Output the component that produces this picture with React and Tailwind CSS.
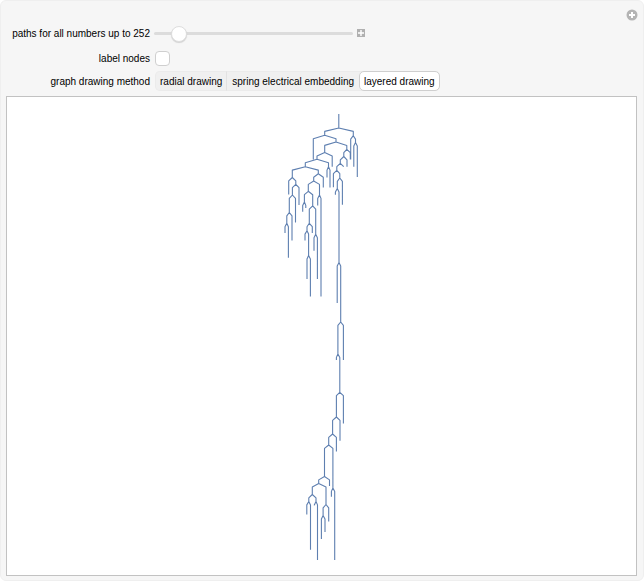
import { useState } from "react";

// Each fork: [x, y, left x, left bottom, right x, right bottom]
const forks = [
  [338.8, 128, 324.7, 135.3, 353.3, 135.7],
  [353.3, 135.7, 350.7, 159.5, 355.5, 142.5],
  [355.5, 142.5, 353.8, 166.7, 357.3, 177],
  [324.7, 135.3, 313.3, 159.5, 336, 142],
  [336, 142, 324.7, 152.5, 346.8, 149.3],
  [324.7, 152.5, 317, 159.3, 332.2, 166.7],
  [317, 159.3, 305.3, 166.7, 328.5, 166.7],
  [328.5, 166.7, 327, 177.5, 330, 187.5],
  [305.3, 166.7, 292.3, 177.5, 318.3, 173.8],
  [292.3, 177.5, 288.7, 194.5, 295.8, 184.3],
  [295.8, 184.3, 292.4, 195, 299, 205],
  [292.4, 195, 289.3, 212.5, 295.5, 222.5],
  [289.3, 212.5, 286.8, 223.3, 292, 240.5],
  [286.8, 223.3, 285, 233, 288.4, 257.8],
  [318.3, 173.8, 313.7, 181, 323.3, 187.5],
  [313.7, 181, 308.3, 191.3, 319.5, 195],
  [308.3, 191.3, 304.4, 202, 312.7, 205.8],
  [304.4, 202, 302.7, 211.7, 305.8, 208],
  [319.5, 195, 317.7, 205.5, 321, 296.5],
  [312.7, 205.8, 309.3, 223.3, 315.7, 234.3],
  [309.3, 223.3, 307, 230.7, 312.3, 233],
  [307, 230.7, 305, 240.5, 308.6, 255.5],
  [308.6, 255.5, 307, 279, 310.4, 296.5],
  [315.7, 234.3, 314, 250.8, 317.4, 279],
  [346.8, 149.3, 343.8, 156.5, 350.3, 159.5],
  [343.8, 156.5, 340.3, 163.3, 347, 166.7],
  [340.3, 163.3, 336.8, 170.3, 343.7, 166.7],
  [336.8, 170.3, 333.4, 187.3, 339.8, 178],
  [339.8, 178, 337.3, 188.5, 342.4, 204.8],
  [337.3, 188.5, 335.4, 194.7, 339, 262.5],
  [339, 262.5, 337.2, 303, 340.7, 322],
  [340.7, 322, 337.9, 354, 343.4, 360],
  [337.9, 354, 336.4, 360, 339.8, 392.3],
  [339.8, 392.3, 336.4, 417, 343.4, 423.5],
  [336.4, 417, 332.6, 434, 340, 440.8],
  [332.6, 434, 328.7, 445, 336.4, 451.5],
  [328.7, 445, 324.5, 476.5, 332.9, 488],
  [324.5, 476.5, 318.7, 483.5, 329.5, 486],
  [318.7, 483.5, 312.3, 494.5, 326, 504.5],
  [312.3, 494.5, 308.8, 501.5, 316, 501.5],
  [308.8, 501.5, 306.8, 514.5, 310.5, 549.8],
  [316, 501.5, 314.3, 504.7, 317.5, 560],
  [326, 504.5, 323.1, 515.5, 328.7, 521.5],
  [323.1, 515.5, 321.4, 539, 325, 532],
  [332.9, 488, 331.4, 496.7, 334.7, 560],
];

const treePath =
  "M338.8 114V128" +
  forks
    .map(([x, y, lx, lb, rx, rb]) => `M${lx} ${lb}V${y + 3.4}L${x} ${y}L${rx} ${y + 3.4}V${rb}`)
    .join("");

const methods = ["radial drawing", "spring electrical embedding", "layered drawing"];

export default function App() {
  const [limit, setLimit] = useState(252);
  const [labels, setLabels] = useState(false);
  const [method, setMethod] = useState("layered drawing");

  return (
    <main className="relative rounded-md border border-[#efefef] bg-[#f6f6f6] pt-5 pr-[6px] pb-[4px] pl-[5px] font-['Liberation_Sans',Arial,sans-serif] text-[10px] text-black">
      <button type="button" aria-label="More options" className="absolute top-2 right-[5px]">
        <svg width="12" height="12" viewBox="0 0 12 12" className="block">
          <circle cx="6" cy="6" r="5.5" fill="#b4b4b4" />
          <path d="M6 3v6M3 6h6" stroke="#fff" strokeWidth="2" />
        </svg>
      </button>

      <div className="grid grid-cols-[144px_1fr] gap-x-1 pb-[5px]">
        <label htmlFor="limit" className="flex h-6 items-center justify-end whitespace-nowrap">
          paths for all numbers up to {limit}
        </label>
        <div className="flex h-6 items-center gap-1">
          <input
            id="limit"
            type="range"
            min="2"
            max="2700"
            value={limit}
            onChange={(e) => setLimit(Number(e.target.value))}
            className="h-4 w-[199px] appearance-none bg-transparent [&::-webkit-slider-runnable-track]:h-[3px] [&::-webkit-slider-runnable-track]:rounded-full [&::-webkit-slider-runnable-track]:bg-[#dcdcdc] [&::-webkit-slider-thumb]:-mt-[6px] [&::-webkit-slider-thumb]:size-4 [&::-webkit-slider-thumb]:appearance-none [&::-webkit-slider-thumb]:rounded-full [&::-webkit-slider-thumb]:border [&::-webkit-slider-thumb]:border-[#dedede] [&::-webkit-slider-thumb]:bg-white [&::-webkit-slider-thumb]:shadow-[0_1px_1px_rgba(0,0,0,0.15)]"
          />
          <button type="button" aria-label="Show slider controls">
            <svg width="8" height="8" viewBox="0 0 8 8" className="block">
              <path d="M0 0h8v8H0z" fill="#b0b0b0" />
              <path d="M4 1v6M1 4h6" stroke="#fff" strokeWidth="1.4" />
            </svg>
          </button>
        </div>

        <label htmlFor="labels" className="flex h-[26px] items-center justify-end">
          label nodes
        </label>
        <div className="flex h-[26px] items-center pl-px">
          <input
            id="labels"
            type="checkbox"
            checked={labels}
            onChange={(e) => setLabels(e.target.checked)}
            className="size-[15px] appearance-none rounded-[4px] border border-[#cfcfcf] bg-white checked:bg-[#5e81b5]"
          />
        </div>

        <div id="method" className="flex h-5 items-center justify-end">
          graph drawing method
        </div>
        <div role="group" aria-labelledby="method" className="flex h-5 pl-px">
          <div className="flex rounded-[5px] bg-[#f0f0f0] ring-1 ring-[#ebebeb] ring-inset">
            {methods.map((m, i) => (
              <button
                key={m}
                type="button"
                aria-pressed={m === method}
                onClick={() => setMethod(m)}
                className={`px-1 whitespace-nowrap ${
                  m === method
                    ? "rounded-[5px] border border-[#cfcfcf] bg-white"
                    : `border ${i === 0 ? "border-transparent border-r-[#e2e2e2]" : "border-transparent"}`
                }`}
              >
                {m}
              </button>
            ))}
          </div>
        </div>
      </div>

      <div className="border border-[#c2c2c2] bg-white">
        <svg viewBox="7 97 629 478" className="block w-full" role="img" aria-label="Layered path tree">
          <path d={treePath} fill="none" stroke="#5e7fb0" strokeWidth="1.1" strokeLinejoin="round" />
        </svg>
      </div>
    </main>
  );
}
